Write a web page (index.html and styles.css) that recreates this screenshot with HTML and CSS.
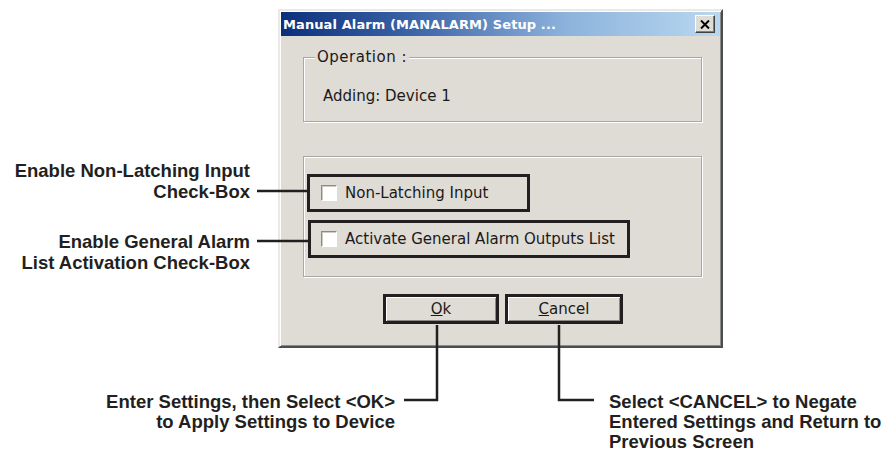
FILE: index.html
```html
<!DOCTYPE html>
<html>
<head>
<meta charset="utf-8">
<title>Manual Alarm Setup</title>
<link rel="stylesheet" href="styles.css">
</head>
<body>
<div class="page">
  <div class="top">
    <div class="left-notes">
      <p class="note note-1">Enable Non-Latching Input<br>Check-Box</p>
      <p class="note note-2">Enable General Alarm<br>List Activation Check-Box</p>
    </div>
    <div class="dialog">
      <div class="titlebar">
        <span class="title">Manual Alarm (MANALARM) Setup ...</span>
        <span class="close">
          <svg width="10" height="9" viewBox="0 0 10 9"><path d="M1 0.5 L9 8.5 M9 0.5 L1 8.5" stroke="#000" stroke-width="2"/></svg>
        </span>
      </div>
      <div class="dialog-body">
        <div class="group group-op">
          <div class="legend">Operation :</div>
          <div class="op-text">Adding: Device 1</div>
        </div>
        <div class="group group-opts">
          <div class="opt opt-1"><span class="check"></span><span class="opt-label">Non-Latching Input</span></div>
          <div class="opt opt-2"><span class="check"></span><span class="opt-label">Activate General Alarm Outputs List</span></div>
        </div>
        <div class="buttons">
          <div class="btn btn-ok"><u>O</u>k</div>
          <div class="btn btn-cancel"><u>C</u>ancel</div>
        </div>
      </div>
    </div>
  </div>
  <div class="bottom">
    <p class="note note-ok">Enter Settings, then Select &lt;OK&gt;<br>to Apply Settings to Device</p>
    <p class="note note-cancel">Select &lt;CANCEL&gt; to Negate<br>Entered Settings and Return to<br>Previous Screen</p>
  </div>
  <svg class="leaders" width="886" height="453" viewBox="0 0 886 453">
    <g stroke="#231f20" stroke-width="2.5" fill="none">
      <path d="M257 191 H308"/>
      <path d="M257 241 H309"/>
      <path d="M437 325 V400 H404"/>
      <path d="M559 325 V400 H594"/>
    </g>
  </svg>
</div>
</body>
</html>
```
FILE: styles.css
```css
html, body {
  margin: 0;
  padding: 0;
  background: #ffffff;
}

.page {
  position: relative;
  width: 886px;
  height: 453px;
  overflow: hidden;
}

.top {
  display: flex;
  align-items: flex-start;
}

.note {
  margin: 0;
  font-family: "Liberation Sans", Arial, sans-serif;
  font-weight: bold;
  font-size: 18.5px;
  line-height: 21px;
  color: #231f20;
  white-space: nowrap;
}

.left-notes {
  width: 278px;
  box-sizing: border-box;
  padding: 160px 28px 0 0;
  text-align: right;
}

.note-2 {
  margin-top: 29px;
}

.dialog {
  margin-top: 9px;
  width: 445px;
  height: 339px;
  box-sizing: border-box;
  background: #dfdbd5;
  border: 2px solid;
  border-color: #ece9e4 #4a4e4e #4a4e4e #ece9e4;
  box-shadow: inset 1px 1px 0 #ffffff, inset -1px -1px 0 #8a8c8a;
  padding: 1px;
  display: flex;
  flex-direction: column;
}

.titlebar {
  height: 24px;
  background: linear-gradient(90deg, #0c2f7c 0%, #3c64a8 30%, #8db3dc 65%, #b9d8f0 100%);
  display: flex;
  align-items: center;
  justify-content: space-between;
  padding: 0 5px 0 2px;
}

.title {
  font-family: "DejaVu Sans", Verdana, sans-serif;
  font-weight: bold;
  font-size: 13px;
  color: #ffffff;
  letter-spacing: 0.1px;
}

.close {
  width: 20px;
  height: 18px;
  box-sizing: border-box;
  background: #dfdbd5;
  border: 1px solid;
  border-color: #ffffff #404040 #404040 #ffffff;
  box-shadow: inset -1px -1px 0 #808080;
  display: flex;
  align-items: center;
  justify-content: center;
}

.dialog-body {
  flex: 1;
  padding: 21px 18px 0 22px;
  font-family: "DejaVu Sans", Verdana, sans-serif;
  font-size: 15px;
  color: #1a1a1a;
}

.group {
  border: 1px solid #a9a7a2;
  box-shadow: 1px 1px 0 #ffffff, inset 1px 1px 0 #ffffff;
}

.group-op {
  height: 65px;
  box-sizing: border-box;
}

.legend {
  width: fit-content;
  margin: -9px 0 0 11px;
  padding: 0 2px;
  line-height: 16px;
  background: #dfdbd5;
  letter-spacing: 0.5px;
}

.op-text {
  margin: 23px 0 0 19px;
  line-height: 16px;
}

.group-opts {
  margin-top: 34px;
  height: 121px;
  box-sizing: border-box;
  padding: 17px 0 0 3px;
}

.opt {
  height: 38px;
  box-sizing: border-box;
  border: 3px solid #231f20;
  display: flex;
  align-items: center;
  padding-left: 11px;
}

.opt-1 {
  width: 223px;
}

.opt-2 {
  width: 322px;
  margin-top: 8px;
  margin-left: 1px;
  padding-left: 10px;
}

.check {
  width: 16px;
  height: 16px;
  box-sizing: border-box;
  background: #ffffff;
  border: 1px solid;
  border-color: #8a8a86 #ffffff #ffffff #8a8a86;
  box-shadow: inset 1px 1px 0 #cfcbc4;
  flex: none;
}

.opt-label {
  margin-left: 8px;
  line-height: 16px;
}

.buttons {
  display: flex;
  gap: 6px;
  margin-top: 17px;
  padding-left: 80px;
}

.btn {
  height: 30px;
  box-sizing: border-box;
  border: 3px solid #231f20;
  box-shadow: inset 1px 1px 0 #ffffff, inset -1px -1px 0 #8a8a86;
  display: flex;
  align-items: center;
  justify-content: center;
  background: #dfdbd5;
}

.btn-ok {
  width: 116px;
}

.btn-cancel {
  width: 118px;
}

.bottom {
  display: flex;
  align-items: flex-start;
  margin-top: 44px;
}

.bottom .note {
  line-height: 20px;
}

.note-ok {
  width: 395px;
  text-align: right;
}

.note-cancel {
  margin-left: 214px;
}

.leaders {
  position: absolute;
  left: 0;
  top: 0;
  pointer-events: none;
}
```
